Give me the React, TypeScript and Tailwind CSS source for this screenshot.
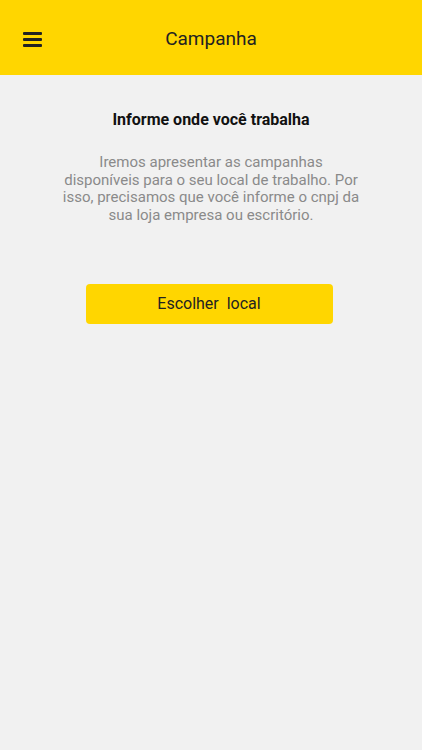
import React from "react";

export default function App() {
  return (
    <div className="w-[422px] h-[750px] bg-[#f1f1f1] flex flex-col" style={{ fontFamily: "Roboto, 'Noto Sans', sans-serif" }}>
      <header className="h-[75px] bg-[#ffd600] flex items-center relative shrink-0">
        <div className="absolute left-[23px] top-[32px] w-[19px] h-[15px] flex flex-col justify-between">
          <div className="h-[3px] bg-[#222] rounded-[1px]" />
          <div className="h-[3px] bg-[#222] rounded-[1px]" />
          <div className="h-[3px] bg-[#222] rounded-[1px]" />
        </div>
        <div className="w-full text-center text-[19px] text-[#222] pt-[3px]">Campanha</div>
      </header>
      <main className="flex flex-col items-center">
        <h1 className="mt-[35px] text-[16px] leading-[20px] font-bold text-[#111]">Informe onde você trabalha</h1>
        <p className="mt-[24px] w-[300px] text-center text-[15px] leading-[17.5px] text-[#8a8a8a]">
          Iremos apresentar as campanhas disponíveis para o seu local de trabalho. Por isso, precisamos que você informe o cnpj da sua loja empresa ou escritório.
        </p>
        <button className="mt-[60px] mr-[4px] w-[247px] h-[40px] bg-[#ffd600] rounded-[4px] text-[16px] text-[#222] whitespace-pre">
          {"Escolher  local"}
        </button>
      </main>
    </div>
  );
}
